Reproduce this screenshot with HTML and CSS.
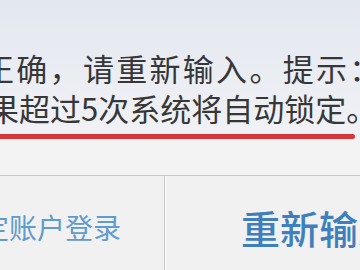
FILE: index.html
```html
<!DOCTYPE html>
<html lang="zh">
<head>
<meta charset="utf-8">
<link rel="stylesheet" href="styles.css">
</head>
<body>
<div class="screen">
  <div class="message">
    <div class="line line-one">正确，请重新输入。提示：</div>
    <div class="line line-two">果超过5次系统将自动锁定。</div>
    <div class="underline"></div>
  </div>
  <div class="band"></div>
  <div class="actions">
    <div class="btn btn-left"><span class="btn-left-text">定账户登录</span></div>
    <div class="btn btn-right"><span class="btn-right-text">重新输入</span></div>
  </div>
</div>
</body>
</html>
```

FILE: styles.css
```css
html, body {
  margin: 0;
  padding: 0;
}
body {
  width: 360px;
  height: 270px;
  overflow: hidden;
  background: #f1f1f1;
  font-family: "Noto Sans CJK SC", "Noto Sans", sans-serif;
}
.screen {
  width: 360px;
  height: 270px;
  overflow: hidden;
  display: flex;
  flex-direction: column;
}
.message {
  background: linear-gradient(to bottom, #e3e7ef 0%, #e9ecf2 45%, #f1f2f5 100%);
  padding-top: 48px;
  height: 92px;
}
.line {
  font-size: 31px;
  line-height: 40px;
  color: #373737;
  white-space: nowrap;
}
.line-one {
  margin-left: -17px;
  letter-spacing: 2.3px;
}
.line-two {
  margin-left: -12px;
  height: 41px;
}
.underline {
  margin-top: 5px;
  width: 355px;
  height: 5px;
  background: #d8343c;
  border-radius: 0 3px 3px 0;
}
.message {
  height: auto;
  padding-bottom: 0;
}
.band {
  height: 36px;
  background: #f3f3f3;
  border-bottom: 1px solid #c9c9c9;
  box-shadow: 0 1px 0 #fbfbfb;
}
.actions {
  flex: 1;
  display: flex;
  background: #f1f1f1;
}
.btn {
  white-space: nowrap;
  overflow: hidden;
}
.btn-left {
  width: 164px;
  border-right: 1px solid #c6c6c6;
  box-shadow: 1px 0 0 #fbfbfb;
  padding-top: 34px;
}
.btn-left-text {
  display: block;
  margin-left: -19px;
  font-size: 28px;
  line-height: 34px;
  color: #5f9bcd;
}
.btn-right {
  flex: 1;
  padding-top: 28px;
  padding-left: 76px;
}
.btn-right-text {
  display: block;
  font-size: 39px;
  line-height: 46px;
  color: #3f7fbd;
  font-weight: 500;
}
```
